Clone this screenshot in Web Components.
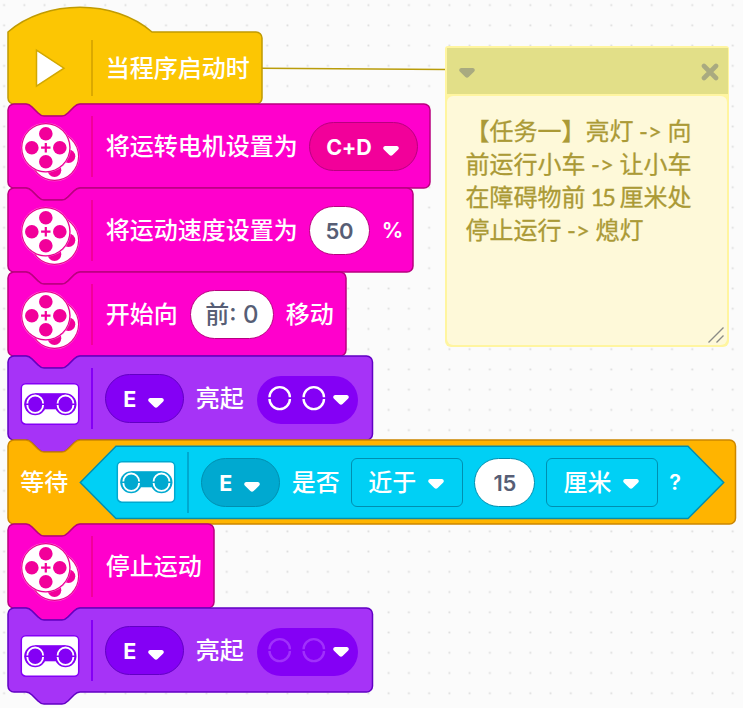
<!DOCTYPE html>
<html lang="zh-CN">
<head>
<meta charset="utf-8">
<title>程序</title>
<style>
  html, body { margin: 0; height: 100%; overflow: hidden; }
  body { font-family: Inter, "Noto Sans CJK SC", sans-serif; }
  comment-note i { display: inline-block; width: 34px; text-align: center; font: 400 24px/30px Lato, sans-serif; }
  comment-note i.num { letter-spacing: -2.5px; text-indent: -1px; }
  block-rule + block-label { margin: 0 -1px 0 1px; }
  .loose { margin-right: 0 !important; }
  hex-block { --gap: 11px; }
</style>
</head>
<body>
<block-workspace>
  <code-block kind="event" w="254" hat>
    <block-icon name="play"></block-icon><block-rule></block-rule>
    <block-label>当程序启动时</block-label>
  </code-block>
  <code-block kind="motion" w="422">
    <block-icon name="motor"></block-icon><block-rule></block-rule>
    <block-label>将运转电机设置为</block-label>
    <block-field w="109.5" arrow="low">C+D</block-field>
  </code-block>
  <code-block kind="motion" w="405">
    <block-icon name="motor"></block-icon><block-rule></block-rule>
    <block-label>将运动速度设置为</block-label>
    <block-field w="61" type="input">50</block-field>
    <block-label>%</block-label>
  </code-block>
  <code-block kind="motion" w="338">
    <block-icon name="motor"></block-icon><block-rule></block-rule>
    <block-label class="loose">开始向</block-label>
    <block-field w="84" type="input">前: 0</block-field>
    <block-label>移动</block-label>
  </code-block>
  <code-block kind="light" w="364.5">
    <block-icon name="sensor"></block-icon><block-rule></block-rule>
    <block-field w="79" arrow="low">E</block-field>
    <block-label>亮起</block-label>
    <light-field></light-field>
  </code-block>
  <code-block kind="control" w="727.5">
    <block-label>等待</block-label>
    <hex-block>
      <block-icon name="sensor" class="inhex"></block-icon><block-rule></block-rule>
      <block-field w="79" arrow="low">E</block-field>
      <block-label>是否</block-label>
      <block-field w="112" type="box" arrow="mid">近于</block-field>
      <block-field w="60.5" type="input">15</block-field>
      <block-field w="112" type="box" arrow="mid">厘米</block-field>
      <block-label>?</block-label>
    </hex-block>
  </code-block>
  <code-block kind="motion" w="206">
    <block-icon name="motor"></block-icon><block-rule></block-rule>
    <block-label>停止运动</block-label>
  </code-block>
  <code-block kind="light" w="364.5">
    <block-icon name="sensor"></block-icon><block-rule></block-rule>
    <block-field w="79" arrow="low">E</block-field>
    <block-label>亮起</block-label>
    <light-field off></light-field>
  </code-block>
  <comment-note slot="note">
    <div>【任务一】亮灯<i>-&gt;</i>向</div>
    <div>前运行小车<i>-&gt;</i>让小车</div>
    <div>在障碍物前<i class="num">15</i>厘米处</div>
    <div>停止运行<i>-&gt;</i>熄灯</div>
  </comment-note>
</block-workspace>
<script>
const ARROW = '<svg class="arrow" width="16" height="10" viewBox="0 0 16 10"><path d="M2 0H14Q16 .4 15.8 2.3Q15.7 3 15 3.7L9.6 9.1Q8 10.6 6.4 9.1L1 3.7Q.3 3 .2 2.3Q0 .4 2 0Z" fill="currentColor"/></svg>';
const define = (name, render) => customElements.define(name, class extends HTMLElement {
  connectedCallback() {
    if (this.shadowRoot) return;
    this.attachShadow({ mode: 'open' }).innerHTML = render(this);
  }
});

define('block-workspace', () => `
<style>
  :host { display: block; position: relative; box-sizing: border-box; width: 743px; height: 708px; padding: 32px 0 0 8.3px; overflow: hidden; background: #fbfbfb; }
  .grid { position: absolute; left: 0; top: 0; }
  .stack { position: relative; display: flex; flex-direction: column; align-items: flex-start; }
  .canvas { position: absolute; left: 445px; top: 46px; }
</style>
<svg class="grid" width="743" height="708">
  <defs><pattern id="p" x="-6" y="-5" width="20.24" height="20.24" patternUnits="userSpaceOnUse"><rect x="9.2" y="9.2" width="1.8" height="1.8" fill="#dcdcdc"/></pattern></defs>
  <rect width="743" height="708" fill="url(#p)"/>
  <path d="M262 68.2L447 69.5" stroke="#b99c0a" stroke-width="1.5"/>
</svg>
<div class="stack"><slot></slot></div>
<div class="canvas"><slot name="note"></slot></div>`);

const KINDS = {
  event: ['#fcc603', '#c09b02', '#dba900'],
  motion: ['#ff00cc', '#b9007f', '#f2009a'],
  light: ['#a633f7', '#6200c4', '#8400f5'],
  control: ['#ffb400', '#cc8600', '#ffb400'],
};

define('code-block', el => {
  const [fill, line, accent] = KINDS[el.getAttribute('kind')];
  const hat = el.hasAttribute('hat');
  const w = el.getAttribute('w') / 1.5, h = hat ? 48 : 56;
  const top = hat ? `M0 0C25-22 71-22 96 0H${w - 4}`
    : `M0 4A4 4 0 0 1 4 0H12c2 0 3 1 4 2l4 4c1 1 2 2 4 2h12c2 0 3-1 4-2l4-4c1-1 2-2 4-2H${w - 4}`;
  return `
<style>
  :host { --line: ${line}; --accent: ${accent}; --fill: ${fill}; position: relative; display: flex; align-items: center; gap: 12px; box-sizing: border-box; width: ${w * 1.5}px; height: ${h * 1.5}px; padding-left: 12px; color: #fff; }
  svg { position: absolute; left: 0; top: 0; overflow: visible; pointer-events: none; }
</style>
<svg width="${w * 1.5}" height="${h * 1.5}"><path transform="scale(1.5)" fill="${fill}" stroke="${line}" stroke-width="1"
 d="${top}a4 4 0 0 1 4 4V${h - 4}a4 4 0 0 1-4 4H48c-2 0-3 1-4 2l-4 4c-1 1-2 2-4 2h-12c-2 0-3-1-4-2l-4-4c-1-1-2-2-4-2H4a4 4 0 0 1-4-4Z"/></svg>
<slot></slot>`;
});

define('hex-block', () => `
<style>
  :host { --line: #008fb0; --accent: #00a9d0; --fill: #00d0f5; position: relative; display: flex; align-items: center; gap: 12px; box-sizing: border-box; width: 644px; height: 73px; padding-left: 36px; }
  svg { position: absolute; left: 0; top: 0; overflow: visible; }
  ::slotted(block-field[type]) { margin-left: -.7px; }
  ::slotted(block-label:last-child) { margin-left: -1px; }
</style>
<svg width="644" height="73"><path d="M36 .2H608L643.7 36.5L608 72.6H36L.3 36.5Z" fill="#00d0f5" stroke="#008fb0" stroke-width="1.5"/></svg>
<slot></slot>`);

define('block-rule', () => `
<style>:host { position: relative; flex: none; width: 1.5px; height: 61px; background: var(--accent); }
:host-context(code-block[hat]) { height: 56px; }</style>`);

define('block-label', el => `
<style>:host { position: relative; top: 1px; flex: none; line-height: 36px; white-space: nowrap; }
span { font: 500 24px/36px "Noto Sans CJK SC", sans-serif; }
span.latin { font: 600 21.5px/36px Inter, sans-serif; }</style><span${/^[%?]$/.test(el.textContent) ? ' class="latin"' : ''}><slot></slot></span>`);

define('block-field', el => {
  const type = el.getAttribute('type');
  const han = /[\u4e00-\u9fff]/.test(el.textContent);
  const menu = el.hasAttribute('arrow');
  return `
<style>
  :host { position: relative; display: flex; align-items: center; justify-content: center; flex: none; box-sizing: border-box; width: ${el.getAttribute('w')}px; height: 49px;
    border: 1.5px solid var(--line); border-radius: ${type === 'box' ? 6 : 25}px;
    background: ${type === 'input' ? '#fff' : type === 'box' ? 'var(--fill)' : 'var(--accent)'};
    color: ${type === 'input' ? '#575e75' : '#fff'};
    font: ${menu ? '700 21.5px' : '600 22px'}/36px Inter, "Noto Sans CJK SC", sans-serif; gap: 12px; white-space: pre; }
  ${menu ? ':host { padding-right: 1.5px; }' : ''}
  span { position: relative; top: 1px; ${han ? 'font-size: 24px; font-weight: 500;' : 'letter-spacing: -.3px;'} }
  .arrow { margin-top: ${el.getAttribute('arrow') === 'low' ? 10 : 4}px; }
</style><span><slot></slot></span>${menu ? ARROW : ''}`;
});

define('light-field', el => {
  const c = el.hasAttribute('off') ? '#a030fb' : '#fff';
  const ring = x => `<path d="M${x - 10.2} 21.3a10.2 10.2 0 0 1 20.4 0M${x - 10.2} 22.9a10.2 10.2 0 0 0 20.4 0" fill="none" stroke="${c}" stroke-width="2.4"/>`;
  return `
<style>
  :host { position: relative; display: flex; align-items: center; flex: none; width: 101px; height: 48px; border-radius: 24px; background: var(--accent); margin: 4px 0 0 1px; }
  .arrow { margin: 0 0 0 1px; }
</style><svg width="75" height="48">${ring(22.7)}${ring(56.8)}</svg>${ARROW}`;
});

const ICONS = {
  play: () => '<path d="M16 18.2V54.2L43.5 36.2Z" fill="#fff" stroke="#d2a800" stroke-width="1.5"/>',
  motor: () => {
    const wheel = (x, y) => `<circle cx="${x}" cy="${y}" r="25" fill="#ff6bd9"/><circle cx="${x}" cy="${y}" r="24.6" fill="#e8008f"/><circle cx="${x}" cy="${y}" r="23.5" fill="#fff"/>
      <g fill="var(--accent)"><circle cx="${x - 14}" cy="${y}" r="6.8"/><circle cx="${x + 14}" cy="${y}" r="6.8"/><circle cx="${x}" cy="${y - 14}" r="6.8"/><circle cx="${x}" cy="${y + 14}" r="6.8"/></g>
      <path d="M${x - 4.7} ${y}h9.4M${x} ${y - 4.7}v9.4" stroke="var(--accent)" stroke-width="2.2"/>`;
    return wheel(34, 52.3) + wheel(25.3, 43.7);
  },
  sensor: el => {
    const dy = el.classList.contains('inhex') ? -6 : 0;
    const eye = x => `<circle cx="${x}" cy="48.2" r="11" fill="var(--accent)"/><path d="M${x - 7.9} 47.4a7.9 7.9 0 0 1 15.8 0M${x - 7.9} 49a7.9 7.9 0 0 0 15.8 0" fill="none" stroke="#fff" stroke-width="1.9"/>`;
    return `<g transform="translate(0 ${dy})"><rect x=".8" y="27.8" width="57.4" height="40.4" rx="4.5" fill="#fff" stroke="var(--accent)" stroke-width="1.5"/>
      <path d="M14.7 37.2H45V53.3H14.7Z" fill="var(--accent)"/>${eye(14.7)}${eye(45)}</g>`;
  },
};
define('block-icon', el => {
  const h = el.getAttribute('name') === 'play' ? 72 : 84;
  return `<style>:host { position: relative; display: block; flex: none; width: 59px; height: ${h}px; } svg { display: block; overflow: visible; }</style>
<svg width="59" height="${h}"><g transform="translate(.5 0)">${ICONS[el.getAttribute('name')](el)}</g></svg>`;
});

define('comment-note', () => `
<style>
  :host { display: flex; flex-direction: column; gap: 1.5px; box-sizing: border-box; width: 284px; height: 301px; padding: 1.5px 1.5px 2px; border-radius: 3px 3px 6px 6px; background: #fff5a0; }
  header { display: flex; align-items: center; justify-content: space-between; flex: none; box-sizing: border-box; height: 46.5px; padding: 3px 9px 0 12.5px; background: #e2df88; color: #a9aa80; }
  .arrow { margin-top: 1px; }
  main { position: relative; flex: 1; margin: 0 .5px; padding: 17px 0 0 18.5px; border-radius: 6px; background: #fef9d9; color: #ab9a36; font: 400 24px/33.2px "Noto Sans CJK SC", sans-serif; white-space: nowrap; }
  ::slotted(div) { height: 33.2px; -webkit-text-stroke: .3px #ab9a36; }
  .grip { position: absolute; right: 3px; bottom: 2px; }
</style>
<header>${ARROW}<svg width="18" height="18"><path d="M3 3L15 15M15 3L3 15" stroke="currentColor" stroke-width="4.6" stroke-linecap="round"/></svg></header>
<main><slot></slot><svg class="grip" width="16" height="16"><path d="M.5 15.5L15.5 .5M8.5 15.5L15.5 8.5" stroke="#8b8b86" stroke-width="1.4"/></svg></main>`);
</script>
</body>
</html>
